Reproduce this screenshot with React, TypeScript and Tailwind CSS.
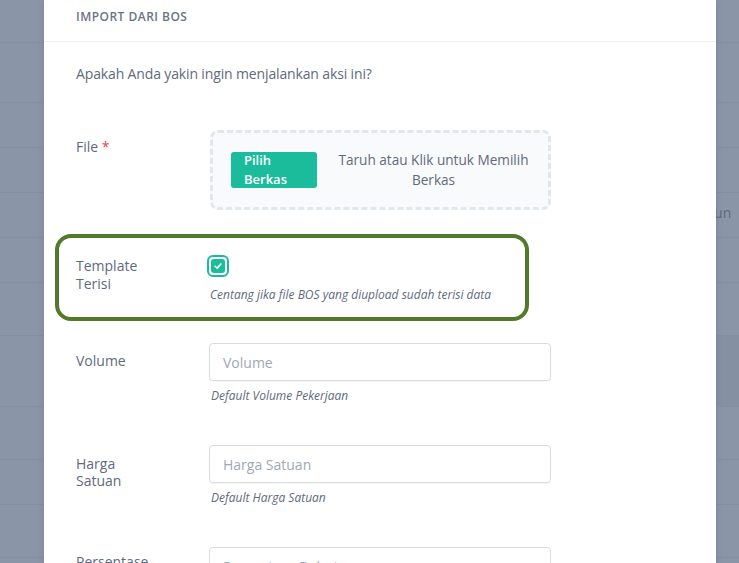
import React from "react";

const font = { fontFamily: '"Open Sans", "Noto Sans", sans-serif' };

function BgRows() {
  const lines = [42, 102, 147, 192, 237, 282, 335, 406, 459, 504, 557];
  return (
    <div className="absolute inset-0 bg-[#8a96a8]">
      {lines.map((y) => (
        <div key={y} className="absolute left-0 right-0 h-px bg-[#8490a2]" style={{ top: y }} />
      ))}
      <div className="absolute right-0 top-[336px] h-[70px] w-[24px] bg-[#8591a3]" />
      <div className="absolute left-[690px] top-[203px] text-[14px] leading-[20px] text-[#5e697b]">Tahun</div>
    </div>
  );
}

function CheckIcon() {
  return (
    <svg width="10" height="10" viewBox="0 0 12 12" fill="none">
      <path d="M2.5 6.3 L5 8.6 L9.5 3.6" stroke="white" strokeWidth="2" strokeLinecap="round" strokeLinejoin="round" />
    </svg>
  );
}

export default function App() {
  return (
    <div className="relative w-[739px] h-[563px] overflow-hidden" style={font}>
      <BgRows />
      <div className="absolute left-[44px] top-0 w-[672px] h-[600px] bg-white shadow-[0_0_6px_rgba(0,0,0,0.12)]">
        <div className="h-[42px] border-b border-[#eef0f3] px-8 pt-[9px]">
          <div className="text-[12px] leading-[16px] font-semibold tracking-[0.04em] text-[#6b7385] uppercase">Import dari BOS</div>
        </div>
        <div className="px-8 pt-[22px]">
          <div className="text-[14px] leading-[20px] text-[#5f6a7e] tracking-[-0.01em]">Apakah Anda yakin ingin menjalankan aksi ini?</div>

          {/* File */}
          <div className="flex mt-[46px]">
            <div className="w-[134px] shrink-0 pt-[7px] text-[14px] leading-[20px] text-[#5f6a7e]">
              File <span className="text-[#ef4444]">*</span>
            </div>
            <div className="w-[341px] h-[80px] rounded-[8px] border-[3px] border-dashed border-[#e2e7ee] bg-[#f8fafc] flex items-center pl-[18px] pr-[14px] gap-[16px]">
              <div className="w-[86px] h-[36px] shrink-0 rounded-[3px] bg-[#1abc9c] text-white text-[13px] leading-[19px] font-semibold pl-[13px] flex flex-col justify-center">
                <span>Pilih</span>
                <span>Berkas</span>
              </div>
              <div className="flex-1 text-center text-[13.6px] leading-[20px] text-[#5f6a7e]">Taruh atau Klik untuk Memilih Berkas</div>
            </div>
          </div>

          {/* Template Terisi */}
          <div className="flex mt-[45px]">
            <div className="w-[131px] shrink-0 pt-[2px] text-[14px] leading-[18px] text-[#5f6a7e]">
              Template
              <br />
              Terisi
            </div>
            <div className="flex flex-col">
              <div className="w-[22px] h-[22px] rounded-[6px] border-2 border-[#1abc9c] p-[2px]">
                <div className="w-full h-full rounded-[3px] bg-[#1abc9c] flex items-center justify-center">
                  <CheckIcon />
                </div>
              </div>
              <div className="mt-[10px] ml-[3px] text-[12px] leading-[15px] italic text-[#5f6a7e]">Centang jika file BOS yang diupload sudah terisi data</div>
            </div>
          </div>

          {/* Volume */}
          <div className="flex mt-[41px]">
            <div className="w-[133px] shrink-0 pt-[9px] text-[14px] leading-[18px] text-[#5f6a7e]">Volume</div>
            <div className="flex flex-col">
              <div className="w-[342px] h-[38px] rounded-[4px] border border-[#d9dde3] shadow-[0_1px_1px_rgba(0,0,0,0.04)] flex items-center px-[13px] text-[14px] text-[#a0a8b6]">Volume</div>
              <div className="mt-[7px] ml-[2px] text-[12px] leading-[15px] italic text-[#5f6a7e]">Default Volume Pekerjaan</div>
            </div>
          </div>

          {/* Harga Satuan */}
          <div className="flex mt-[42px]">
            <div className="w-[133px] shrink-0 pt-[10px] text-[14px] leading-[17px] text-[#5f6a7e]">
              Harga
              <br />
              Satuan
            </div>
            <div className="flex flex-col">
              <div className="w-[342px] h-[38px] rounded-[4px] border border-[#d9dde3] shadow-[0_1px_1px_rgba(0,0,0,0.04)] flex items-center px-[13px] text-[14px] text-[#a0a8b6]">Harga Satuan</div>
              <div className="mt-[7px] ml-[2px] text-[12px] leading-[15px] italic text-[#5f6a7e]">Default Harga Satuan</div>
            </div>
          </div>

          {/* Persentase */}
          <div className="flex mt-[42px]">
            <div className="w-[133px] shrink-0 pt-[6px] text-[14px] leading-[17px] text-[#5f6a7e]">
              Persentase
              <br />
              Bobot
            </div>
            <div className="flex flex-col">
              <div className="w-[342px] h-[38px] rounded-[4px] border border-[#d9dde3] flex items-center px-[13px] text-[14px] text-[#a0a8b6]">Persentase Bobot</div>
            </div>
          </div>
        </div>

        {/* annotation highlight */}
        <div className="absolute left-[11px] top-[234px] w-[474px] h-[87px] rounded-[16px] border-[4px] border-[#527a2a]" />
      </div>
    </div>
  );
}
